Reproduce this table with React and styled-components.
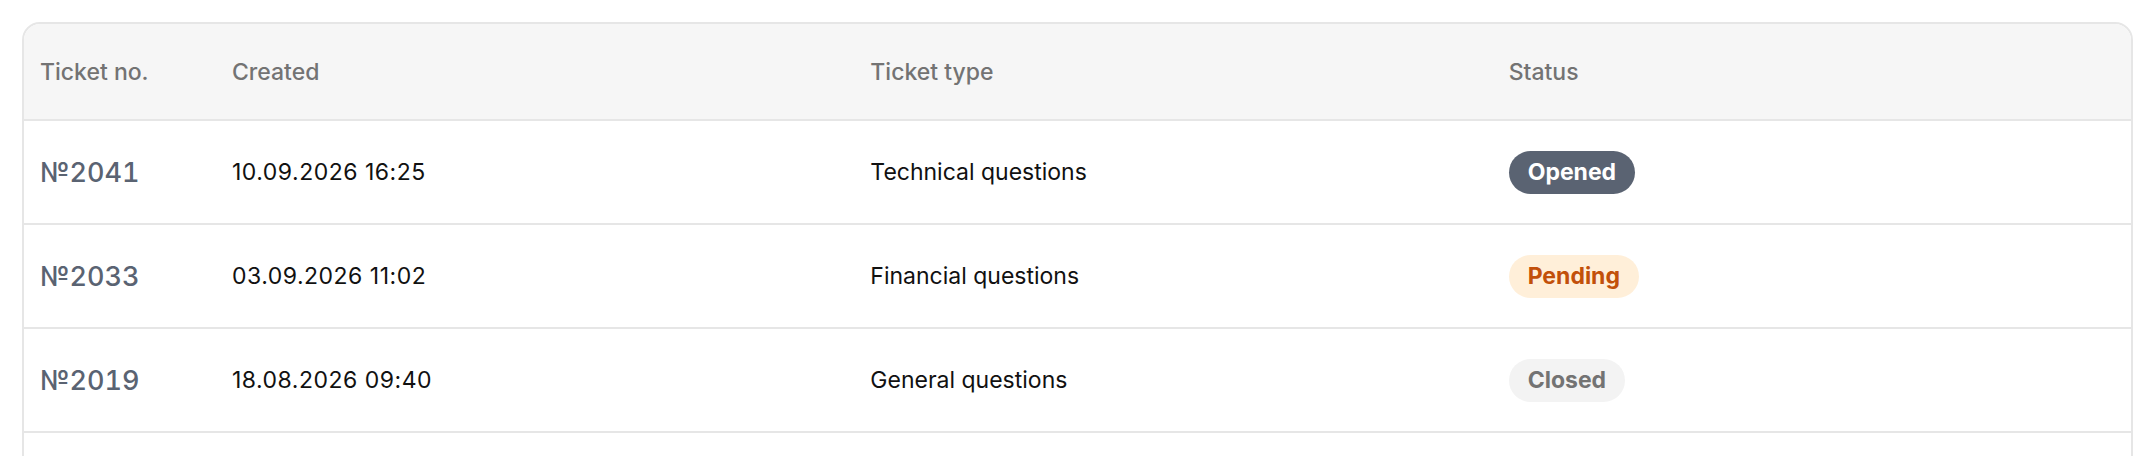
import React from "react";
import styled, { createGlobalStyle } from "styled-components";

const tickets = [
  { id: 2041, created: "10.09.2026 16:25", type: "Technical questions", status: "opened" },
  { id: 2033, created: "03.09.2026 11:02", type: "Financial questions", status: "pending" },
  { id: 2019, created: "18.08.2026 09:40", type: "General questions", status: "closed" },
];

const statusLabels = {
  opened: "Opened",
  pending: "Pending",
  closed: "Closed",
};

const GlobalStyle = createGlobalStyle`
  body {
    margin: 0;
    background: #ffffff;
    font-family: Inter, "Noto Sans", sans-serif;
  }
`;

const Page = styled.div`
  padding: 22px 23px 0 22px;
`;

const Card = styled.div`
  border: 2px solid #e6e6e6;
  border-radius: 18px;
  overflow: hidden;
  background: #ffffff;
`;

const Row = styled.div`
  display: grid;
  grid-template-columns: 192px 1fr 1fr 1fr;
  align-items: center;
  height: ${({ $head }) => ($head ? "95px" : "102px")};
  background: ${({ $head }) => ($head ? "#f6f6f6" : "#ffffff")};
  border-bottom: 2px solid #e6e6e6;
`;

const HeadCell = styled.div`
  padding-left: 16px;
  font-size: 23px;
  font-weight: 500;
  color: #737373;
`;

const Cell = styled.div`
  padding-left: 16px;
  font-size: 23px;
  color: #111111;
`;

const DateCell = styled(Cell)`
  letter-spacing: 0.5px;
`;

const Number = styled(Cell)`
  font-size: 27px;
  font-weight: 500;
  color: #5a6372;
  font-variant-numeric: tabular-nums;
`;

// empty space under the last row, the card runs on below the frame
const Footer = styled.div`
  height: 80px;
`;

const badgeColors = {
  opened: { bg: "#5a6372", fg: "#ffffff" },
  pending: { bg: "#ffefd9", fg: "#c2500a" },
  closed: { bg: "#f3f3f3", fg: "#737373" },
};

const Badge = styled.span`
  display: inline-flex;
  align-items: center;
  height: 43px;
  padding: 0 19px;
  border-radius: 22px;
  font-size: 23px;
  font-weight: 700;
  background: ${({ $status }) => badgeColors[$status].bg};
  color: ${({ $status }) => badgeColors[$status].fg};
`;

export default function App() {
  return (
    <Page>
      <GlobalStyle />
      <Card>
        <Row $head>
          <HeadCell>Ticket no.</HeadCell>
          <HeadCell>Created</HeadCell>
          <HeadCell>Ticket type</HeadCell>
          <HeadCell>Status</HeadCell>
        </Row>
        {tickets.map((t) => (
          <Row key={t.id}>
            <Number>№{t.id}</Number>
            <DateCell>{t.created}</DateCell>
            <Cell>{t.type}</Cell>
            <Cell>
              <Badge $status={t.status}>{statusLabels[t.status]}</Badge>
            </Cell>
          </Row>
        ))}
        <Footer />
      </Card>
    </Page>
  );
}
